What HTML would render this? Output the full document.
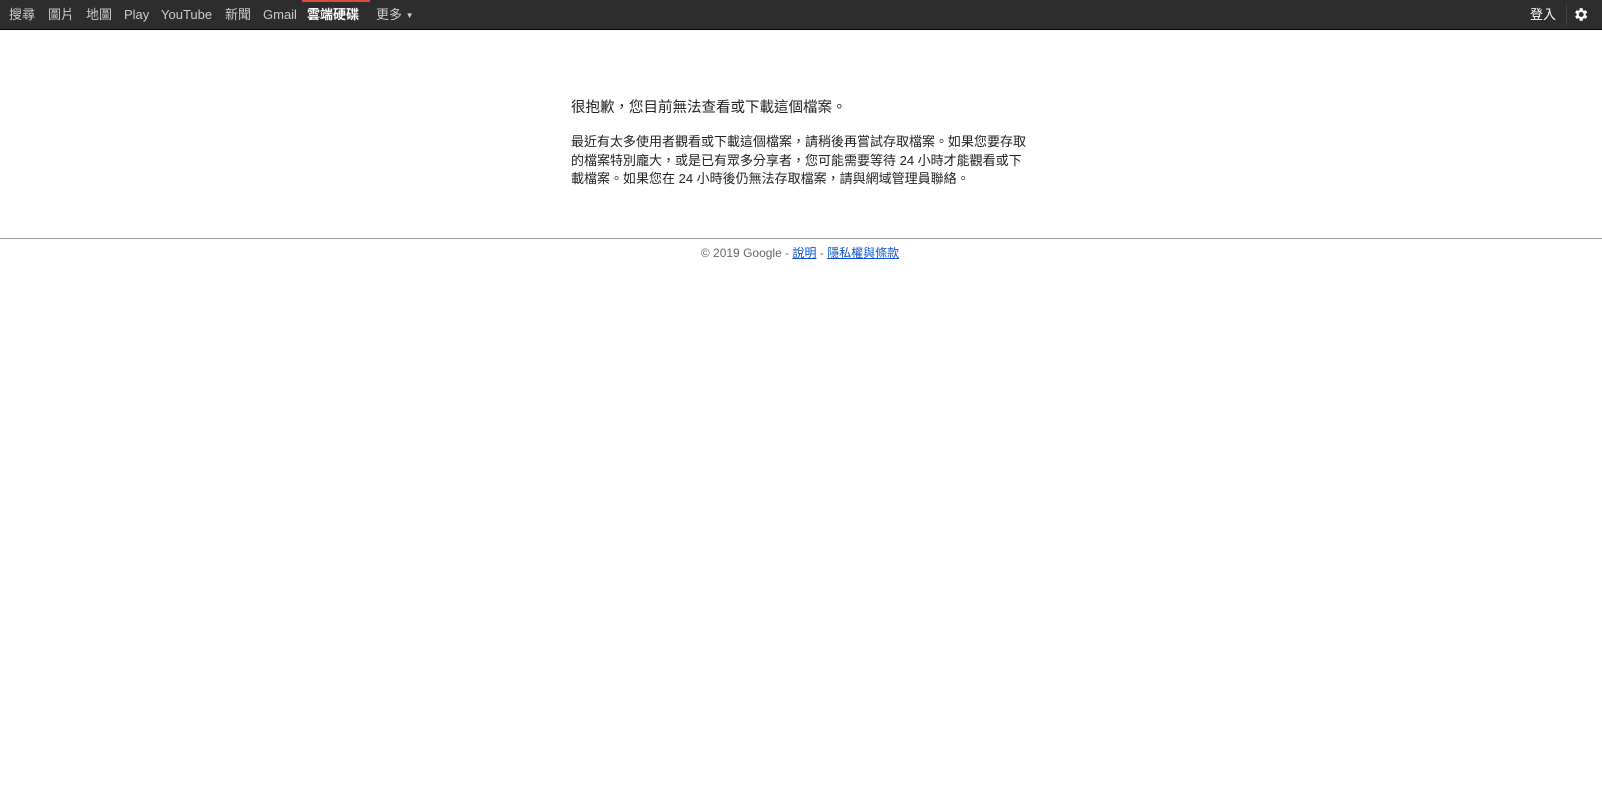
<!DOCTYPE html>
<html><head><meta charset="utf-8"><style>
body{margin:0;background:#fff;font-family:"Liberation Sans","Noto Sans CJK TC",sans-serif;}
#bar{position:absolute;left:0;top:0;width:1602px;height:29px;background:#2d2d2d;border-bottom:1px solid #000;}
#bar span{position:absolute;top:6px;height:18px;line-height:18px;font-size:13px;color:#ccc;white-space:nowrap;}
#bar .sel{color:#fff;font-weight:bold;}
#red{position:absolute;left:302px;top:0;width:68px;height:2px;background:#dd4b39;}
#main{position:absolute;left:571px;top:97px;width:600px;}
h1{font-size:14.5px;line-height:22px;font-weight:normal;margin:0;color:#222;}
p{font-size:13px;line-height:18.5px;margin:14px 0 0;color:#222;white-space:nowrap;}
#hr{position:absolute;left:0;top:238px;width:1602px;height:1px;background:#999;}
#foot{position:absolute;left:0;top:245px;width:1600px;text-align:center;font-size:12px;line-height:16px;color:#666;}
#foot a{color:#15c;}
</style></head><body>
<div id="bar">
<div id="red"></div>
<span style="left:9px">搜尋</span>
<span style="left:48px">圖片</span>
<span style="left:86px">地圖</span>
<span style="left:124px">Play</span>
<span style="left:161px">YouTube</span>
<span style="left:225px">新聞</span>
<span style="left:263px">Gmail</span>
<span class="sel" style="left:307px">雲端硬碟</span>
<span style="left:376px">更多 <span style="position:static;font-size:8px;vertical-align:1px">▼</span></span>
<span style="left:1530px;color:#fff">登入</span>
<div style="position:absolute;left:1566px;top:4px;width:1px;height:21px;background:#444"></div>
<svg style="position:absolute;left:1572px;top:6px" width="17" height="17" viewBox="0 0 24 24"><path fill="#fff" d="M19.4 13a7.5 7.5 0 0 0 0-2l2.1-1.6-2-3.5-2.5 1a7 7 0 0 0-1.7-1L15 3h-4l-.4 2.9a7 7 0 0 0-1.7 1l-2.5-1-2 3.5L6.6 11a7.5 7.5 0 0 0 0 2l-2.2 1.6 2 3.5 2.5-1a7 7 0 0 0 1.7 1L11 21h4l.4-2.9a7 7 0 0 0 1.7-1l2.5 1 2-3.5zM13 15.5a3.5 3.5 0 1 1 0-7 3.5 3.5 0 0 1 0 7z"/></svg>
</div>
<div id="main">
<h1>很抱歉，您目前無法查看或下載這個檔案。</h1>
<p>最近有太多使用者觀看或下載這個檔案，請稍後再嘗試存取檔案。如果您要存取<br>的檔案特別龐大，或是已有眾多分享者，您可能需要等待 24 小時才能觀看或下<br>載檔案。如果您在 24 小時後仍無法存取檔案，請與網域管理員聯絡。</p>
</div>
<div id="hr"></div>
<div id="foot">© 2019 Google - <a href="#">說明</a> - <a href="#">隱私權與條款</a></div>
</body></html>
